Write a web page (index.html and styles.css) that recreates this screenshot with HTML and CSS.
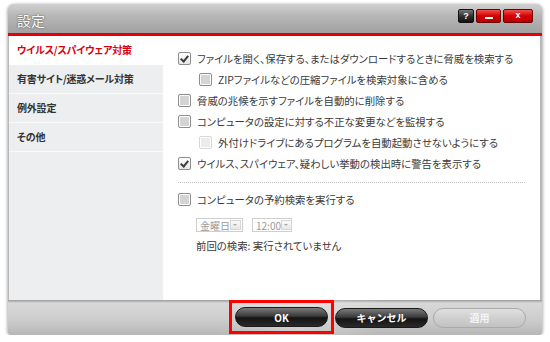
FILE: index.html
```html
<!DOCTYPE html>
<html lang="ja">
<head>
  <meta charset="UTF-8" />
  <title>設定</title>
  <link rel="stylesheet" href="styles.css">
</head>
<body>
  <div class="window">
    <div class="titlebar">
      <span class="title">設定</span>
      <div class="caption-btns">
        <span class="cap help">?</span>
        <span class="cap min"><i></i></span>
        <span class="cap close">x</span>
      </div>
    </div>
    <div class="main">
      <ul class="sidebar">
        <li class="active">ウイルス/スパイウェア対策</li>
        <li>有害サイト/迷惑メール対策</li>
        <li>例外設定</li>
        <li>その他</li>
      </ul>
      <div class="content">
        <div class="opt"><span class="cb checked"></span>ファイルを開く、保存する、またはダウンロードするときに脅威を検索する</div>
        <div class="opt sub"><span class="cb"></span>ZIPファイルなどの圧縮ファイルを検索対象に含める</div>
        <div class="opt"><span class="cb"></span>脅威の兆候を示すファイルを自動的に削除する</div>
        <div class="opt"><span class="cb"></span>コンピュータの設定に対する不正な変更などを監視する</div>
        <div class="opt sub"><span class="cb off"></span>外付けドライブにあるプログラムを自動起動させないようにする</div>
        <div class="opt"><span class="cb checked"></span>ウイルス、スパイウェア、疑わしい挙動の検出時に警告を表示する</div>
        <hr class="sep">
        <div class="opt"><span class="cb"></span>コンピュータの予約検索を実行する</div>
        <div class="schedule">
          <span class="select day">金曜日<b></b></span>
          <span class="select time">12:00<b></b></span>
        </div>
        <p class="last">前回の検索: 実行されていません</p>
      </div>
    </div>
    <div class="footer">
      <div class="highlight"><button class="btn">OK</button></div>
      <button class="btn">キャンセル</button>
      <button class="btn disabled">適用</button>
    </div>
  </div>
</body>
</html>
```

FILE: styles.css
```css
body {
  margin: 0;
  background: #fff;
  font-family: "Noto Sans CJK JP", "Noto Sans", sans-serif;
  font-feature-settings: "palt";
}

.window {
  margin: 5px 0 0 8px;
  width: 534px;
  height: 330px;
  display: flex;
  flex-direction: column;
  border-radius: 6px 6px 4px 4px;
  box-shadow: 0 0 3px 1px rgba(0, 0, 0, 0.3);
  overflow: hidden;
  background: #b8b8b8;
}

.titlebar {
  height: 28px;
  display: flex;
  align-items: flex-start;
  justify-content: space-between;
  background: linear-gradient(#cfcfcf 0, #b6b6b6 40%, #a2a2a2 100%);
  border-bottom: 3px solid #e3000b;
}

.title {
  margin: 5px 0 0 9px;
  font-size: 14px;
  color: #fff;
  text-shadow: 0 0 2px #666, 0 0 1px #555;
}

.caption-btns {
  display: flex;
  gap: 2px;
  margin: 4px 9px 0 0;
}

.cap {
  height: 12px;
  border-radius: 2px;
  color: #fff;
  font: bold 9px/12px "Liberation Sans", sans-serif;
  text-align: center;
  border: 1px solid #6b0000;
  background: linear-gradient(#f05050 0, #d40000 50%, #b80000 100%);
}

.help {
  width: 14px;
  border-color: #111;
  background: linear-gradient(#777 0, #333 50%, #111 100%);
}

.min {
  width: 23px;
  display: flex;
  align-items: flex-end;
  justify-content: center;
}

.min i {
  width: 8px;
  height: 2px;
  background: #fff;
  margin-bottom: 3px;
}

.close {
  width: 28px;
  line-height: 10px;
}

.main {
  flex: 1;
  display: flex;
  margin: 0 2px 0 1px;
  background: #fff;
}

.sidebar {
  list-style: none;
  margin: 0;
  padding: 0;
  width: 154px;
  background: #eceef0;
}

.sidebar li {
  height: 28px;
  line-height: 28px;
  padding-left: 8px;
  font-size: 10px;
  font-weight: bold;
  color: #333;
  letter-spacing: -0.2px;
  border-bottom: 1px solid #f9f9fa;
}

.sidebar li.active {
  background: #fff;
  color: #d9000f;
  border-bottom-color: #fff;
}

.content {
  flex: 1;
  padding: 12px 0 0 15px;
  font-size: 10.4px;
  color: #3a3a3a;
}

.opt {
  height: 21px;
  display: flex;
  align-items: center;
  gap: 6px;
}

.opt.sub {
  padding-left: 21px;
}

.cb {
  width: 11px;
  height: 11px;
  border: 1px solid #8d8d8d;
  border-radius: 2px;
  background: #fff;
  box-shadow: inset 0 0 0 1px #fff, inset 0 0 0 6px #d4d4d4;
  position: relative;
}

.cb.off {
  border-color: #d8d8d8;
  box-shadow: inset 0 0 0 1px #fff, inset 0 0 0 6px #ececec;
}

.cb.checked {
  box-shadow: none;
  background: linear-gradient(#fff, #e6e6e6);
}

.cb.checked::after {
  content: "";
  position: absolute;
  left: 3px;
  top: 1px;
  width: 3px;
  height: 6px;
  border: solid #3a3a3a;
  border-width: 0 2px 2px 0;
  transform: rotate(40deg);
}

.sep {
  margin: 8px 15px 6px 0;
  border: none;
  border-top: 1px dotted #c4c4c4;
}

.schedule {
  display: flex;
  gap: 9px;
  margin: 8px 0 0 18px;
}

.select {
  box-sizing: border-box;
  height: 14px;
  display: flex;
  align-items: center;
  padding-left: 3px;
  border: 1px solid #cfcfcf;
  color: #9a9a9a;
  font-size: 10px;
  white-space: nowrap;
}

.select b {
  flex: none;
  margin-left: auto;
  box-sizing: border-box;
  width: 11px;
  height: 10px;
  border: 1px solid #d6d6d6;
  margin-right: 1px;
  background: linear-gradient(#fafafa, #e8e8e8);
  position: relative;
}

.select b::after {
  content: "";
  position: absolute;
  left: 2px;
  top: 3px;
  border: 2px solid transparent;
  border-top-color: #aaa;
}

.day {
  width: 47px;
}

.time {
  width: 40px;
}

.last {
  margin: 6px 0 0 18px;
}

.footer {
  height: 35px;
  display: flex;
  align-items: center;
  justify-content: flex-end;
  padding-right: 16px;
  background: linear-gradient(100deg, transparent 40%, rgba(255, 255, 255, 0.25) 55%, transparent 70%),
    linear-gradient(#9a9a9a 0, #d8d8d8 3px, #cdcdcd 55%, #b7b7b7 100%);
  border-radius: 0 0 4px 4px;
}

.highlight {
  height: 28px;
  padding: 0 3px;
  display: flex;
  align-items: center;
  border: 3px solid #ff0000;
  margin-right: 1px;
  align-self: flex-start;
}

.btn {
  width: 93px;
  height: 20px;
  border-radius: 10px;
  border: 1px solid #1a1a1a;
  background: linear-gradient(#7a7a7a 0, #3a3a3a 45%, #141414 55%, #2a2a2a 100%);
  color: #fff;
  font-family: "Noto Sans CJK JP", sans-serif;
  font-size: 10px;
  font-weight: bold;
  padding: 0;
  margin-right: 5px;
}

.highlight .btn {
  margin-right: 0;
}

.btn.disabled {
  margin-right: 0;
  border-color: #aaa;
  background: linear-gradient(#e0e0e0 0, #cfcfcf 50%, #c2c2c2 100%);
  color: #f4f4f4;
}
```
